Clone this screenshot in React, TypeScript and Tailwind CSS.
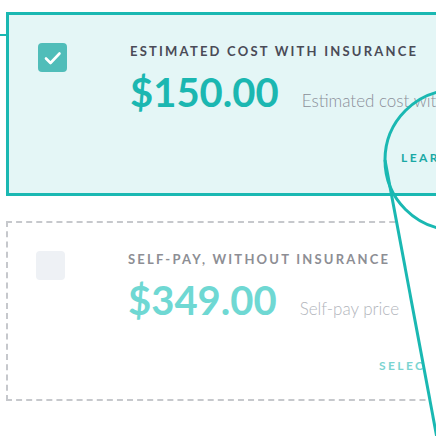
import React from "react";

const font = { fontFamily: "Lato, 'Open Sans', sans-serif" };

const CheckIcon = () => (
  <svg width="29" height="29" viewBox="0 0 29 29" fill="none">
    <path d="M8 15.5l4.5 4.5 9-9.5" stroke="#fff" strokeWidth="2.6" strokeLinecap="round" strokeLinejoin="round" />
  </svg>
);

type OptionProps = {
  selected: boolean;
  title: string;
  price: string;
  note: string;
  action: string;
};

const OptionCard: React.FC<OptionProps> = ({ selected, title, price, note, action }) => {
  return (
    <div
      className={
        selected
          ? "ml-[6px] flex h-[184px] w-[480px] border-[3px] border-[#1ab8b2] bg-[#e4f6f6] pl-[29px] pt-[28px]"
          : "ml-[6px] flex h-[180px] w-[480px] border-2 border-dashed border-[#c6c8cc] bg-white pl-[28px] pt-[28px]"
      }
    >
      <div
        className={
          selected
            ? "flex h-[29px] w-[29px] shrink-0 items-center justify-center rounded-[4px] bg-[#50bdb9]"
            : "h-[29px] w-[29px] shrink-0 rounded-[4px] bg-[#eef1f5]"
        }
      >
        {selected && <CheckIcon />}
      </div>
      <div className="ml-[63px] flex flex-col">
        <p
          className={
            selected
              ? "mt-[-1px] text-[13px] font-bold uppercase leading-[18px] tracking-[0.17em] text-[#4a4b57]"
              : "mt-[-1px] text-[13px] font-bold uppercase leading-[18px] tracking-[0.17em] text-[#8d8e94]"
          }
        >
          {title}
        </p>
        <div className="mt-[10px] flex items-baseline whitespace-nowrap">
          <span
            className={
              selected
                ? "text-[40px] font-bold leading-[44px] text-[#1bb7b1]"
                : "text-[40px] font-bold leading-[44px] text-[#6fd8d3]"
            }
          >
            {price}
          </span>
          <span
            className={
              selected
                ? "ml-[23px] text-[17px] font-light text-[#8b8f99]"
                : "ml-[23px] text-[17px] font-light text-[#b2b5bc]"
            }
          >
            {note}
          </span>
        </div>
        <p
          className={
            selected
              ? "ml-[271px] mt-[35px] text-[12px] font-bold uppercase tracking-[0.2em] text-[#1aa9a5]"
              : "ml-[251px] mt-[35px] text-[12px] font-bold uppercase tracking-[0.2em] text-[#7bd4d1]"
          }
        >
          {action}
        </p>
      </div>
    </div>
  );
};

export default function App() {
  return (
    <div className="relative h-[436px] w-[436px] overflow-hidden bg-white pt-[12px]" style={font}>
      <OptionCard
        selected
        title="Estimated cost with insurance"
        price="$150.00"
        note="Estimated cost with insurance"
        action="Learn more"
      />
      <div className="h-[25px]" />
      <OptionCard
        selected={false}
        title="Self-pay, without insurance"
        price="$349.00"
        note="Self-pay price"
        action="Select"
      />

      {/* callout annotation */}
      <div className="absolute left-0 top-[34px] h-[2px] w-[7px] bg-[#1ab8b2]" />
      <svg className="absolute left-0 top-0" width="436" height="436" viewBox="0 0 436 436">
        <polygon points="392,199 440,199 440,440 438,440" fill="#fff" />
        <circle cx="455" cy="160" r="70" fill="none" stroke="#1ab8b2" strokeWidth="3" />
        <line x1="385" y1="160" x2="437" y2="438" stroke="#1ab8b2" strokeWidth="3" />
      </svg>
    </div>
  );
}
